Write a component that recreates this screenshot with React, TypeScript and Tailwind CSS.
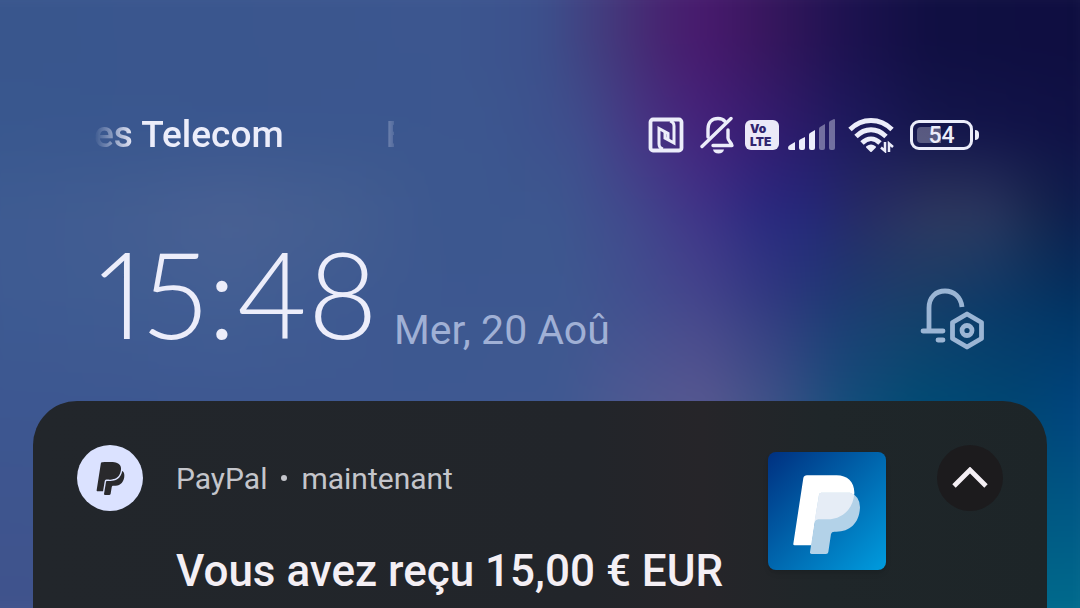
import { FaPaypal } from 'react-icons/fa'

// Each band starts fading in where the previous one is fully opaque
const Wallpaper = () => (
  <div className="absolute -bottom-8 -left-24 -right-8 -top-8 -z-10 blur-lg" aria-hidden="true">
    <div className="absolute inset-0 bg-[linear-gradient(90deg,#38568d_0%,#3c568f_46%,#3c508c_53%,#433b7d_58%,#472370_63%,#481a6e_66%,#39175f_71%,#1d1250_78%,#100f42_85%,#0e0e40_100%)]" />
    <div className="absolute inset-0 bg-[linear-gradient(90deg,#39588f_0%,#3c578f_48%,#3f4e8d_56%,#463685_61%,#44247d_66%,#351d73_71%,#1e1b60_78%,#15174d_85%,#0f1145_100%)] [mask-image:linear-gradient(180deg,transparent_72px,black_172px)]" />
    <div className="absolute inset-0 bg-[linear-gradient(90deg,#3b5a93_0%,#425d92_16%,#4a6193_27%,#445e91_36%,#3c578f_45%,#3d578f_54%,#414a8d_60%,#403488_66%,#2b2a80_71%,#24287a_75%,#272c66_79%,#303a5f_86%,#2c385f_90%,#18284f_94%,#0a1c4e_98%)] [mask-image:linear-gradient(180deg,transparent_162px,black_252px)]" />
    <div className="absolute inset-0 bg-[linear-gradient(90deg,#3c5991_0%,#425e93_27%,#3d5890_42%,#3e5890_55%,#434f8f_61%,#45468c_66%,#313a80_72%,#1f3b74_77%,#1a406a_83%,#0c3a68_90%,#003362_98%)] [mask-image:linear-gradient(180deg,transparent_242px,black_342px)]" />
    <div className="absolute inset-0 bg-[linear-gradient(90deg,#3d5791_0%,#3e5891_42%,#3f5891_54%,#4e5992_60%,#585890_66%,#3e5287_72%,#144e7b_78%,#004b74_84%,#004673_92%,#004580_98%)] [mask-image:linear-gradient(180deg,transparent_332px,black_442px)]" />
    <div className="absolute inset-0 bg-[linear-gradient(90deg,#40528b_0%,#405890_60%,#00688a_90%,#006b8d_98%)] [mask-image:linear-gradient(180deg,transparent_442px,black_640px)]" />
  </div>
)

const NfcIcon = () => (
  <svg viewBox="0 0 36 36" className="size-9" fill="none" stroke="currentColor">
    <rect x="2.500" y="2.500" width="31" height="31" rx="2.500" strokeWidth="3.800" />
    <path d="M15 32Q11 31 11 27V11.500L20 16.500V22.500" strokeWidth="3" />
    <path d="M22 4Q26 5 26 9V26L17 21V14" strokeWidth="3" />
  </svg>
)

const BellOffIcon = () => (
  <svg viewBox="0 0 36 38" className="h-[38px] w-9" fill="none" stroke="currentColor" strokeWidth="3.400">
    <path d="M8 21V13C8 6 12 2.500 18 2.500C21 2.500 23.500 3.500 25 5.500M28 14V22C28 25 32 27 32 29.500H13" strokeLinejoin="round" strokeLinecap="round" />
    <path d="M2 30.500L31 2.500" strokeLinecap="round" />
    <path d="M13 33.500H24C23.500 36 21.500 37.500 18.500 37.500S13.500 36 13 33.500Z" fill="currentColor" stroke="none" />
  </svg>
)

const SignalIcon = () => (
  <svg viewBox="0 0 48 34" className="h-[34px] w-12" fill="currentColor">
    <path d="M0 30Q0 28 2 27L7 24V32H2Q0 32 0 30ZM11 23Q11 22 12 21.500L17 19V30Q17 32 15 32H13Q11 32 11 30ZM21 17Q21 15.500 22 15L27 12V30Q27 32 25 32H23Q21 32 21 30Z" />
    <path d="M31 11Q31 9.500 32 9L37 6V30Q37 32 35 32H33Q31 32 31 30ZM41 5Q41 3.500 42 3L46 1Q47 1 47 2V30Q47 32 45 32H43Q41 32 41 30Z" opacity=".4" />
  </svg>
)

const WifiIcon = () => (
  <svg viewBox="0 0 46 36" className="h-9 w-[46px]" fill="none" stroke="currentColor" strokeWidth="4.800">
    <path d="M2 12.500C14 .5 32 .5 44 12.500M8 19.500C17 10.500 29 10.500 38 19.500M14 26C19.500 20.500 26.500 20.500 32 26" />
    <path d="M19 30Q23 27 27 30L23 34Z" fill="currentColor" strokeWidth="2" strokeLinejoin="round" />
    <path d="M37 25V34L33 30.500M41 35V26.500L45 30" strokeWidth="2.500" />
  </svg>
)

const StatusBar = () => (
  <header className="flex items-center justify-between">
    <div className="flex w-[300px] gap-[102px] overflow-hidden whitespace-nowrap text-[37px] font-medium leading-[46px] [mask-image:linear-gradient(90deg,transparent_0,black_40px,black_260px,#0005_292px,#0002_300px)]">
      <span>es Telecom</span>
      <span>B</span>
    </div>
    <div className="flex items-center">
      <NfcIcon />
      <span className="ml-4">
        <BellOffIcon />
      </span>
      <div className="ml-[9px] flex h-[30px] w-[34px] flex-col justify-center rounded-md bg-[#ebe9f8] pl-[5px] font-[Inter] text-[12px] font-black leading-[13px] text-[#30246e]">
        Vo
        <br />
        LTE
      </div>
      <span className="ml-[9px]">
        <SignalIcon />
      </span>
      <span className="ml-3">
        <WifiIcon />
      </span>
      <div className="ml-4 flex items-center gap-[2px]">
        <div className="flex h-[30px] w-[63px] items-center rounded-[9px] border-3 border-current p-[4px]">
          <div className="flex h-full w-full items-center justify-center rounded-[4px] bg-[linear-gradient(90deg,#ffffff48_50%,transparent_50%)] text-[23px] font-medium leading-none">
            54
          </div>
        </div>
        <div className="h-[10px] w-1 rounded-r-sm bg-current" />
      </div>
    </div>
  </header>
)

const NotificationSettingsIcon = () => (
  <svg viewBox="0 0 66 62" className="h-[62px] w-[66px]" fill="none" stroke="currentColor" strokeWidth="4.800" strokeLinecap="round" strokeLinejoin="round">
    <path d="M9 42V20C9 9 16 3 25 3C34 3 41 9 42 19" strokeLinecap="butt" />
    <path d="M3 43H23M18 52H23" />
    <path d="M47 26L61.500 34.500V50.500L47 59L32.500 50.500V34.500Z" />
    <circle cx="47" cy="42.500" r="5" />
  </svg>
)

const PayPalTile = () => (
  <svg viewBox="0 0 354 354" className="size-[118px] rounded-lg shadow-md" role="img" aria-label="PayPal">
    <defs>
      <linearGradient id="tile" x1="0" y1="0" x2="1" y2="1">
        <stop offset="0" stopColor="#003080" />
        <stop offset=".5" stopColor="#0067ae" />
        <stop offset="1" stopColor="#009cde" />
      </linearGradient>
      <clipPath id="front">
        <path d="M117 70H206C238 70 260 90 259 124C256 172 222 202 178 202H151Q143 202 141 210L126 280H80Q75 280 76 275L106 78Q108 70 117 70Z" />
      </clipPath>
    </defs>
    <rect width="354" height="354" fill="url(#tile)" />
    <path d="M117 70H206C238 70 260 90 259 124C256 172 222 202 178 202H151Q143 202 141 210L131 280H80Q75 280 76 275L106 78Q108 70 117 70Z" fill="#fff" />
    <path d="M160 122H246Q276 132 276 166C274 214 245 239 205 239H199Q191 239 189 246L181 300Q180 306 174 306H131Q125 306 126 300L153 128Q154 122 160 122Z" fill="#b3d2e8" />
    <path d="M160 122H246Q276 132 276 166L250 220L140 206L153 128Q154 122 160 122Z" fill="#e6edf6" clipPath="url(#front)" />
  </svg>
)

const Notification = () => (
  <article className="mx-[33px] flex grow items-start rounded-t-[44px] bg-[linear-gradient(90deg,#22262b_0%,#22252a_55%,#262529_66%,#1f2629_78%,#1d2528_100%)] px-11 pt-11">
    <div className="flex size-[66px] shrink-0 items-center justify-center rounded-full bg-[#dbe2ff] text-[#29292c]">
      <FaPaypal size={37} />
    </div>
    <div className="ml-[33px] grow font-[Roboto]">
      <p className="flex h-[66px] items-center gap-3.5 text-[30px] text-[#c4c5cb]">
        <span>PayPal</span>
        <span className="size-[6px] rounded-full bg-current" />
        <span>maintenant</span>
      </p>
      <h2 className="mt-8 whitespace-nowrap text-[44px] font-medium leading-[56px] text-[#f4eff4]">Vous avez reçu 15,00 € EUR</h2>
    </div>
    <div className="mt-[7px] shrink-0">
      <PayPalTile />
    </div>
    <button type="button" aria-label="Réduire" className="ml-[51px] flex size-[66px] shrink-0 items-center justify-center rounded-full bg-[#1c1b1d] text-[#f4eff4]">
      <svg viewBox="0 0 36 22" className="h-[22px] w-9" fill="none" stroke="currentColor" strokeWidth="4.800">
        <path d="M2 19L18 3L34 19" />
      </svg>
    </button>
  </article>
)

export default function App() {
  return (
    <main className="relative isolate flex h-screen flex-col overflow-hidden font-[Roboto,sans-serif] text-[#ecedfa]">
      <Wallpaper />
      <div className="pl-[94px] pr-[101px] pt-[112px]">
        <StatusBar />
      </div>
      <section className="flex items-end justify-between pb-[45px] pl-[98px] pr-[94px] pt-[72px]">
        <div className="flex items-end gap-4">
          <time className="font-[Lato,sans-serif] text-[120px] font-light leading-[126px] proportional-nums">15:48</time>
          <span className="text-[41px] leading-[52px] text-[#a0b0d5]">Mer, 20 Aoû</span>
        </div>
        <button type="button" aria-label="Paramètres des notifications" className="mb-[6px] text-[#9bb5d4]">
          <NotificationSettingsIcon />
        </button>
      </section>
      <Notification />
    </main>
  )
}
